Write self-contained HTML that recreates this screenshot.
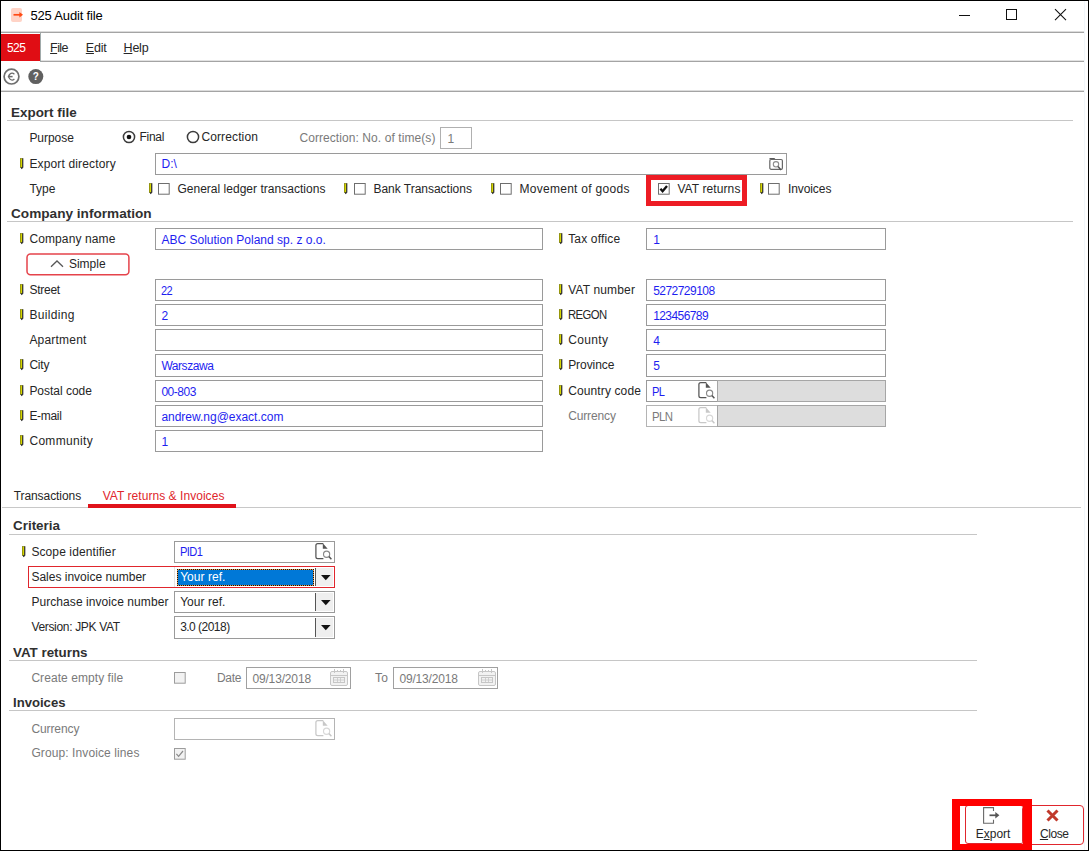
<!DOCTYPE html>
<html lang="en"><head><meta charset="utf-8"><title>525 Audit file</title>
<style>
html,body{margin:0;padding:0;background:#fff;}
body{width:1089px;height:851px;position:relative;overflow:hidden;font-family:"Liberation Sans",sans-serif;}
.b{position:absolute;box-sizing:border-box;display:block;}
.t{position:absolute;white-space:pre;line-height:20px;height:20px;transform-origin:0 50%;}
.t u{text-decoration:underline;text-underline-offset:1px;}
#frame{position:absolute;left:0;top:0;width:1089px;height:851px;box-sizing:border-box;border:1px solid #000;}
</style></head>
<body>
<div class="b" style="left:11px;top:8px;width:11px;height:14px;background:#ffd3c6;border-radius:2px;"></div>
<svg class="b" style="left:13px;top:10px" width="11" height="10" viewBox="0 0 11 10"><path d="M0.5 4.8 H7.5" fill="none" stroke="#ff4a14" stroke-width="1.7"/><path d="M6.4 2 L10 4.8 L6.4 7.6 Z" fill="#ff4a14"/></svg>
<div class="b" style="left:959px;top:15px;width:11px;height:1px;background:#111;"></div>
<div class="b" style="left:1006px;top:9px;width:11px;height:11px;border:1px solid #111;"></div>
<svg class="b" style="left:1054px;top:8px" width="13" height="13" viewBox="0 0 13 13"><path d="M1 1.2 L12 12.2 M12 1.2 L1 12.2" stroke="#111" stroke-width="1.1"/></svg>
<div class="b" style="left:1px;top:31px;width:1084px;height:1px;background:#dcdcdc;"></div>
<div class="b" style="left:1px;top:32px;width:1084px;height:1px;background:#a4a4a4;"></div>
<div class="b" style="left:1px;top:34px;width:39px;height:27px;background:#e00d14;"></div>
<div class="b" style="left:41px;top:60px;width:1044px;height:1px;background:#e2e2e2;"></div>
<div class="b" style="left:41px;top:61px;width:1044px;height:1px;background:#a4a4a4;"></div>
<div class="b" style="left:40px;top:33px;width:1px;height:29px;background:#a0aaaa;"></div>
<svg class="b" style="left:3px;top:68px" width="18" height="18" viewBox="0 0 18 18"><circle cx="8.5" cy="8.6" r="7.4" fill="#fff" stroke="#6e6e6e" stroke-width="1.7"/><path d="M11.4 6.2 A3.3 3.3 0 1 0 11.4 11" fill="none" stroke="#6a6a6a" stroke-width="1.2"/><path d="M4.8 8.6 H9.6" stroke="#6a6a6a" stroke-width="1.5"/></svg>
<svg class="b" style="left:28px;top:69px" width="16" height="16" viewBox="0 0 16 16"><circle cx="7.8" cy="7.6" r="7.5" fill="#606060"/><text x="7.8" y="11.2" text-anchor="middle" font-family="Liberation Sans, sans-serif" font-weight="bold" font-size="10" fill="#fff">?</text></svg>
<div class="b" style="left:1px;top:90px;width:1084px;height:1px;background:#dcdcdc;"></div>
<div class="b" style="left:1px;top:91px;width:1084px;height:1px;background:#a4a4a4;"></div>
<div class="b" style="left:1084px;top:1px;width:1px;height:849px;background:#f1f6fb;"></div>
<div class="b" style="left:7px;top:120px;width:1066px;height:1px;background:#c6c6c6;"></div>
<svg class="b" style="left:122.3px;top:129.8px" width="14" height="14" viewBox="0 0 14 14"><circle cx="7" cy="7" r="5.6" fill="#fff" stroke="#3c3c3c" stroke-width="1.5"/><circle cx="7" cy="7" r="2.3" fill="#111"/></svg>
<svg class="b" style="left:185.8px;top:129.8px" width="14" height="14" viewBox="0 0 14 14"><circle cx="7" cy="7" r="5.6" fill="#fff" stroke="#3c3c3c" stroke-width="1.5"/></svg>
<div class="b" style="left:440px;top:127px;width:32px;height:22px;background:#fff;border:1px solid #b0b0b0;"></div>
<svg class="b" style="left:20px;top:158px" width="4" height="12" viewBox="0 0 4 12"><rect x="0" y="0.4" width="2.3" height="9.2" fill="#d6d600"/><rect x="0" y="0.4" width="0.6" height="9.2" fill="#6e6e10"/><rect x="0" y="0.2" width="3.2" height="0.6" fill="#77771a"/><rect x="2.2" y="0.4" width="1.1" height="9.2" fill="#151515"/><path d="M0.3 9.2 H3.2 L1.8 11.2 Z" fill="#111"/></svg>
<div class="b" style="left:155px;top:153px;width:632px;height:22px;background:#fff;border:1px solid #9a9a9a;"></div>
<svg class="b" style="left:769px;top:157px" width="15" height="14" viewBox="0 0 15 14"><path d="M0.5 0.9 H5.4 L6.9 2.6 H0.5 Z" fill="#5c5c5c"/><rect x="0.8" y="2.5" width="12.6" height="9.8" rx="1.3" fill="#fff" stroke="#686868" stroke-width="1.2"/><circle cx="7" cy="7.3" r="2.7" fill="#fff" stroke="#8c8c8c" stroke-width="1.1"/><path d="M9 9.6 L12 13" stroke="#555" stroke-width="1.5"/></svg>
<svg class="b" style="left:149px;top:183px" width="4" height="12" viewBox="0 0 4 12"><rect x="0" y="0.4" width="2.3" height="9.2" fill="#d6d600"/><rect x="0" y="0.4" width="0.6" height="9.2" fill="#6e6e10"/><rect x="0" y="0.2" width="3.2" height="0.6" fill="#77771a"/><rect x="2.2" y="0.4" width="1.1" height="9.2" fill="#151515"/><path d="M0.3 9.2 H3.2 L1.8 11.2 Z" fill="#111"/></svg>
<svg class="b" style="left:158px;top:183px" width="12" height="12" viewBox="0 0 12 12"><rect x="0.5" y="0.5" width="10.7" height="10.7" fill="#fff" stroke="#6e6e6e"/></svg>
<svg class="b" style="left:344.3px;top:183px" width="4" height="12" viewBox="0 0 4 12"><rect x="0" y="0.4" width="2.3" height="9.2" fill="#d6d600"/><rect x="0" y="0.4" width="0.6" height="9.2" fill="#6e6e10"/><rect x="0" y="0.2" width="3.2" height="0.6" fill="#77771a"/><rect x="2.2" y="0.4" width="1.1" height="9.2" fill="#151515"/><path d="M0.3 9.2 H3.2 L1.8 11.2 Z" fill="#111"/></svg>
<svg class="b" style="left:353.6px;top:183px" width="12" height="12" viewBox="0 0 12 12"><rect x="0.5" y="0.5" width="10.7" height="10.7" fill="#fff" stroke="#6e6e6e"/></svg>
<svg class="b" style="left:491.3px;top:183px" width="4" height="12" viewBox="0 0 4 12"><rect x="0" y="0.4" width="2.3" height="9.2" fill="#d6d600"/><rect x="0" y="0.4" width="0.6" height="9.2" fill="#6e6e10"/><rect x="0" y="0.2" width="3.2" height="0.6" fill="#77771a"/><rect x="2.2" y="0.4" width="1.1" height="9.2" fill="#151515"/><path d="M0.3 9.2 H3.2 L1.8 11.2 Z" fill="#111"/></svg>
<svg class="b" style="left:499.5px;top:183px" width="12" height="12" viewBox="0 0 12 12"><rect x="0.5" y="0.5" width="10.7" height="10.7" fill="#fff" stroke="#6e6e6e"/></svg>
<svg class="b" style="left:657.5px;top:183px" width="12" height="12" viewBox="0 0 12 12"><rect x="0.5" y="0.5" width="10.7" height="10.7" fill="#fff" stroke="#6e6e6e"/><path d="M2.4 5.8 L4.6 8.3 L9 3" fill="none" stroke="#111" stroke-width="2.3"/></svg>
<svg class="b" style="left:760px;top:183px" width="4" height="12" viewBox="0 0 4 12"><rect x="0" y="0.4" width="2.3" height="9.2" fill="#d6d600"/><rect x="0" y="0.4" width="0.6" height="9.2" fill="#6e6e10"/><rect x="0" y="0.2" width="3.2" height="0.6" fill="#77771a"/><rect x="2.2" y="0.4" width="1.1" height="9.2" fill="#151515"/><path d="M0.3 9.2 H3.2 L1.8 11.2 Z" fill="#111"/></svg>
<svg class="b" style="left:768px;top:183px" width="12" height="12" viewBox="0 0 12 12"><rect x="0.5" y="0.5" width="10.7" height="10.7" fill="#fff" stroke="#6e6e6e"/></svg>
<div class="b" style="left:646px;top:175px;width:101px;height:31px;border:5px solid #ed1c24;"></div>
<div class="b" style="left:7px;top:221px;width:1066px;height:1px;background:#c6c6c6;"></div>
<svg class="b" style="left:20px;top:233px" width="4" height="12" viewBox="0 0 4 12"><rect x="0" y="0.4" width="2.3" height="9.2" fill="#d6d600"/><rect x="0" y="0.4" width="0.6" height="9.2" fill="#6e6e10"/><rect x="0" y="0.2" width="3.2" height="0.6" fill="#77771a"/><rect x="2.2" y="0.4" width="1.1" height="9.2" fill="#151515"/><path d="M0.3 9.2 H3.2 L1.8 11.2 Z" fill="#111"/></svg>
<div class="b" style="left:155px;top:228px;width:388px;height:22px;background:#fff;border:1px solid #9a9a9a;"></div>
<svg class="b" style="left:20px;top:284px" width="4" height="12" viewBox="0 0 4 12"><rect x="0" y="0.4" width="2.3" height="9.2" fill="#d6d600"/><rect x="0" y="0.4" width="0.6" height="9.2" fill="#6e6e10"/><rect x="0" y="0.2" width="3.2" height="0.6" fill="#77771a"/><rect x="2.2" y="0.4" width="1.1" height="9.2" fill="#151515"/><path d="M0.3 9.2 H3.2 L1.8 11.2 Z" fill="#111"/></svg>
<div class="b" style="left:155px;top:279px;width:388px;height:22px;background:#fff;border:1px solid #9a9a9a;"></div>
<svg class="b" style="left:20px;top:309px" width="4" height="12" viewBox="0 0 4 12"><rect x="0" y="0.4" width="2.3" height="9.2" fill="#d6d600"/><rect x="0" y="0.4" width="0.6" height="9.2" fill="#6e6e10"/><rect x="0" y="0.2" width="3.2" height="0.6" fill="#77771a"/><rect x="2.2" y="0.4" width="1.1" height="9.2" fill="#151515"/><path d="M0.3 9.2 H3.2 L1.8 11.2 Z" fill="#111"/></svg>
<div class="b" style="left:155px;top:304px;width:388px;height:22px;background:#fff;border:1px solid #9a9a9a;"></div>
<div class="b" style="left:155px;top:329px;width:388px;height:22px;background:#fff;border:1px solid #9a9a9a;"></div>
<svg class="b" style="left:20px;top:359px" width="4" height="12" viewBox="0 0 4 12"><rect x="0" y="0.4" width="2.3" height="9.2" fill="#d6d600"/><rect x="0" y="0.4" width="0.6" height="9.2" fill="#6e6e10"/><rect x="0" y="0.2" width="3.2" height="0.6" fill="#77771a"/><rect x="2.2" y="0.4" width="1.1" height="9.2" fill="#151515"/><path d="M0.3 9.2 H3.2 L1.8 11.2 Z" fill="#111"/></svg>
<div class="b" style="left:155px;top:354px;width:388px;height:23px;background:#fff;border:1px solid #9a9a9a;"></div>
<svg class="b" style="left:20px;top:385px" width="4" height="12" viewBox="0 0 4 12"><rect x="0" y="0.4" width="2.3" height="9.2" fill="#d6d600"/><rect x="0" y="0.4" width="0.6" height="9.2" fill="#6e6e10"/><rect x="0" y="0.2" width="3.2" height="0.6" fill="#77771a"/><rect x="2.2" y="0.4" width="1.1" height="9.2" fill="#151515"/><path d="M0.3 9.2 H3.2 L1.8 11.2 Z" fill="#111"/></svg>
<div class="b" style="left:155px;top:380px;width:388px;height:22px;background:#fff;border:1px solid #9a9a9a;"></div>
<svg class="b" style="left:20px;top:410px" width="4" height="12" viewBox="0 0 4 12"><rect x="0" y="0.4" width="2.3" height="9.2" fill="#d6d600"/><rect x="0" y="0.4" width="0.6" height="9.2" fill="#6e6e10"/><rect x="0" y="0.2" width="3.2" height="0.6" fill="#77771a"/><rect x="2.2" y="0.4" width="1.1" height="9.2" fill="#151515"/><path d="M0.3 9.2 H3.2 L1.8 11.2 Z" fill="#111"/></svg>
<div class="b" style="left:155px;top:405px;width:388px;height:22px;background:#fff;border:1px solid #9a9a9a;"></div>
<svg class="b" style="left:20px;top:435px" width="4" height="12" viewBox="0 0 4 12"><rect x="0" y="0.4" width="2.3" height="9.2" fill="#d6d600"/><rect x="0" y="0.4" width="0.6" height="9.2" fill="#6e6e10"/><rect x="0" y="0.2" width="3.2" height="0.6" fill="#77771a"/><rect x="2.2" y="0.4" width="1.1" height="9.2" fill="#151515"/><path d="M0.3 9.2 H3.2 L1.8 11.2 Z" fill="#111"/></svg>
<div class="b" style="left:155px;top:430px;width:388px;height:22px;background:#fff;border:1px solid #9a9a9a;"></div>
<svg class="b" style="left:558.8px;top:233px" width="4" height="12" viewBox="0 0 4 12"><rect x="0" y="0.4" width="2.3" height="9.2" fill="#d6d600"/><rect x="0" y="0.4" width="0.6" height="9.2" fill="#6e6e10"/><rect x="0" y="0.2" width="3.2" height="0.6" fill="#77771a"/><rect x="2.2" y="0.4" width="1.1" height="9.2" fill="#151515"/><path d="M0.3 9.2 H3.2 L1.8 11.2 Z" fill="#111"/></svg>
<div class="b" style="left:646px;top:228px;width:240px;height:22px;background:#fff;border:1px solid #9a9a9a;"></div>
<svg class="b" style="left:558.8px;top:284px" width="4" height="12" viewBox="0 0 4 12"><rect x="0" y="0.4" width="2.3" height="9.2" fill="#d6d600"/><rect x="0" y="0.4" width="0.6" height="9.2" fill="#6e6e10"/><rect x="0" y="0.2" width="3.2" height="0.6" fill="#77771a"/><rect x="2.2" y="0.4" width="1.1" height="9.2" fill="#151515"/><path d="M0.3 9.2 H3.2 L1.8 11.2 Z" fill="#111"/></svg>
<div class="b" style="left:646px;top:279px;width:240px;height:22px;background:#fff;border:1px solid #9a9a9a;"></div>
<svg class="b" style="left:558.8px;top:309px" width="4" height="12" viewBox="0 0 4 12"><rect x="0" y="0.4" width="2.3" height="9.2" fill="#d6d600"/><rect x="0" y="0.4" width="0.6" height="9.2" fill="#6e6e10"/><rect x="0" y="0.2" width="3.2" height="0.6" fill="#77771a"/><rect x="2.2" y="0.4" width="1.1" height="9.2" fill="#151515"/><path d="M0.3 9.2 H3.2 L1.8 11.2 Z" fill="#111"/></svg>
<div class="b" style="left:646px;top:304px;width:240px;height:22px;background:#fff;border:1px solid #9a9a9a;"></div>
<svg class="b" style="left:558.8px;top:334px" width="4" height="12" viewBox="0 0 4 12"><rect x="0" y="0.4" width="2.3" height="9.2" fill="#d6d600"/><rect x="0" y="0.4" width="0.6" height="9.2" fill="#6e6e10"/><rect x="0" y="0.2" width="3.2" height="0.6" fill="#77771a"/><rect x="2.2" y="0.4" width="1.1" height="9.2" fill="#151515"/><path d="M0.3 9.2 H3.2 L1.8 11.2 Z" fill="#111"/></svg>
<div class="b" style="left:646px;top:329px;width:240px;height:22px;background:#fff;border:1px solid #9a9a9a;"></div>
<svg class="b" style="left:558.8px;top:359px" width="4" height="12" viewBox="0 0 4 12"><rect x="0" y="0.4" width="2.3" height="9.2" fill="#d6d600"/><rect x="0" y="0.4" width="0.6" height="9.2" fill="#6e6e10"/><rect x="0" y="0.2" width="3.2" height="0.6" fill="#77771a"/><rect x="2.2" y="0.4" width="1.1" height="9.2" fill="#151515"/><path d="M0.3 9.2 H3.2 L1.8 11.2 Z" fill="#111"/></svg>
<div class="b" style="left:646px;top:354px;width:240px;height:23px;background:#fff;border:1px solid #9a9a9a;"></div>
<svg class="b" style="left:558.8px;top:385px" width="4" height="12" viewBox="0 0 4 12"><rect x="0" y="0.4" width="2.3" height="9.2" fill="#d6d600"/><rect x="0" y="0.4" width="0.6" height="9.2" fill="#6e6e10"/><rect x="0" y="0.2" width="3.2" height="0.6" fill="#77771a"/><rect x="2.2" y="0.4" width="1.1" height="9.2" fill="#151515"/><path d="M0.3 9.2 H3.2 L1.8 11.2 Z" fill="#111"/></svg>
<div class="b" style="left:646px;top:380px;width:72px;height:22px;background:#fff;border:1px solid #9a9a9a;"></div>
<div class="b" style="left:717px;top:380px;width:169px;height:22px;background:#dddddd;border:1px solid #a6a6a6;"></div>
<svg class="b" style="left:697.5px;top:382px" width="17" height="17" viewBox="0 0 17 17"><path d="M8.3 0.7 H2.8 Q0.9 0.7 0.9 2.6 V13.8 Q0.9 15.7 2.8 15.7 H8.4" fill="none" stroke="#555" stroke-width="1.25"/><path d="M7.8 0.2 L12.7 5.8 H7.8 Z" fill="#555"/><circle cx="11.6" cy="11.2" r="3.1" fill="none" stroke="#8a8a8a" stroke-width="1.15"/><path d="M13.9 13.6 L16.4 16.2" stroke="#555" stroke-width="1.5"/></svg>
<div class="b" style="left:646px;top:405px;width:72px;height:22px;background:#fff;border:1px solid #b4b4b4;"></div>
<div class="b" style="left:717px;top:405px;width:169px;height:22px;background:#dddddd;border:1px solid #a6a6a6;"></div>
<svg class="b" style="left:697.5px;top:407px" width="17" height="17" viewBox="0 0 17 17"><path d="M8.3 0.7 H2.8 Q0.9 0.7 0.9 2.6 V13.8 Q0.9 15.7 2.8 15.7 H8.4" fill="none" stroke="#c8c8c8" stroke-width="1.25"/><path d="M7.8 0.2 L12.7 5.8 H7.8 Z" fill="#c8c8c8"/><circle cx="11.6" cy="11.2" r="3.1" fill="none" stroke="#d8d8d8" stroke-width="1.15"/><path d="M13.9 13.6 L16.4 16.2" stroke="#c8c8c8" stroke-width="1.5"/></svg>
<svg class="b" style="left:25px;top:252px" width="107" height="26" viewBox="0 0 107 26"><rect x="2" y="1.9" width="101.9" height="20.9" rx="3.5" fill="#fff" stroke="#e5434b" stroke-width="1.5"/></svg>
<svg class="b" style="left:49px;top:259px" width="16" height="9" viewBox="0 0 16 9"><path d="M2 7.8 L8 2 L14 7.8" fill="none" stroke="#585858" stroke-width="1.3"/></svg>
<div class="b" style="left:2px;top:507px;width:1079px;height:1px;background:#c8c8c8;"></div>
<div class="b" style="left:88px;top:504px;width:148px;height:4px;background:#e0121a;"></div>
<div class="b" style="left:9px;top:534px;width:968px;height:1px;background:#c6c6c6;"></div>
<svg class="b" style="left:22.2px;top:546.4px" width="4" height="12" viewBox="0 0 4 12"><rect x="0" y="0.4" width="2.3" height="9.2" fill="#d6d600"/><rect x="0" y="0.4" width="0.6" height="9.2" fill="#6e6e10"/><rect x="0" y="0.2" width="3.2" height="0.6" fill="#77771a"/><rect x="2.2" y="0.4" width="1.1" height="9.2" fill="#151515"/><path d="M0.3 9.2 H3.2 L1.8 11.2 Z" fill="#111"/></svg>
<div class="b" style="left:174px;top:541px;width:161px;height:22px;background:#fff;border:1px solid #9a9a9a;"></div>
<svg class="b" style="left:314.5px;top:543px" width="17" height="17" viewBox="0 0 17 17"><path d="M8.3 0.7 H2.8 Q0.9 0.7 0.9 2.6 V13.8 Q0.9 15.7 2.8 15.7 H8.4" fill="none" stroke="#555" stroke-width="1.25"/><path d="M7.8 0.2 L12.7 5.8 H7.8 Z" fill="#555"/><circle cx="11.6" cy="11.2" r="3.1" fill="none" stroke="#8a8a8a" stroke-width="1.15"/><path d="M13.9 13.6 L16.4 16.2" stroke="#555" stroke-width="1.5"/></svg>
<div class="b" style="left:28px;top:566px;width:307px;height:22px;background:#fff;border:1px solid #e0262d;"></div>
<div class="b" style="left:174px;top:567px;width:1px;height:20px;background:#e4e4e4;"></div>
<div class="b" style="left:316px;top:568px;width:17px;height:18px;background:#efefef;"></div>
<div class="b" style="left:315px;top:568px;width:1px;height:18px;background:#555;"></div>
<svg class="b" style="left:320.5px;top:574.5px" width="10" height="6" viewBox="0 0 10 6"><path d="M0 0 H9.6 L4.8 5.2 Z" fill="#111"/></svg>
<div class="b" style="left:177px;top:569px;width:137px;height:17px;background:#0078d7;border:1px solid #e09a50;"></div>
<div class="b" style="left:177px;top:569px;width:137px;height:17px;border:1px dotted #1a1208;"></div>
<div class="b" style="left:174px;top:591px;width:161px;height:22px;background:#fff;border:1px solid #9a9a9a;"></div>
<div class="b" style="left:316px;top:593px;width:17px;height:18px;background:#efefef;"></div>
<div class="b" style="left:315px;top:593px;width:1px;height:18px;background:#555;"></div>
<svg class="b" style="left:320.5px;top:599.5px" width="10" height="6" viewBox="0 0 10 6"><path d="M0 0 H9.6 L4.8 5.2 Z" fill="#111"/></svg>
<div class="b" style="left:174px;top:616px;width:161px;height:23px;background:#fff;border:1px solid #9a9a9a;"></div>
<div class="b" style="left:316px;top:618px;width:17px;height:19px;background:#efefef;"></div>
<div class="b" style="left:315px;top:618px;width:1px;height:19px;background:#555;"></div>
<svg class="b" style="left:320.5px;top:624.5px" width="10" height="6" viewBox="0 0 10 6"><path d="M0 0 H9.6 L4.8 5.2 Z" fill="#111"/></svg>
<div class="b" style="left:9px;top:660px;width:968px;height:1px;background:#c6c6c6;"></div>
<svg class="b" style="left:174px;top:672px" width="12" height="12" viewBox="0 0 12 12"><rect x="0.5" y="0.5" width="10.7" height="10.7" fill="#f2f2f2" stroke="#9c9c9c"/></svg>
<div class="b" style="left:246px;top:667px;width:105px;height:22px;background:#fff;border:1px solid #a0a0a0;"></div>
<svg class="b" style="left:330px;top:669px" width="18" height="17" viewBox="0 0 18 17"><rect x="0.5" y="2.5" width="17" height="14" rx="1.5" fill="#f2f2f2" stroke="#c6c6c6"/><path d="M1 6.5 H17" stroke="#c6c6c6"/><path d="M4.5 0 V4 M13.5 0 V4 M7.5 1 V3 M10.5 1 V3" stroke="#c6c6c6" stroke-width="1"/><rect x="3.5" y="8.5" width="11" height="5" fill="none" stroke="#c6c6c6"/><path d="M7.5 8.5 V13.5 M10.5 8.5 V13.5 M3.5 11 H14.5" stroke="#c6c6c6" stroke-width="0.8"/></svg>
<div class="b" style="left:393px;top:667px;width:105px;height:22px;background:#fff;border:1px solid #a0a0a0;"></div>
<svg class="b" style="left:477.5px;top:669px" width="18" height="17" viewBox="0 0 18 17"><rect x="0.5" y="2.5" width="17" height="14" rx="1.5" fill="#f2f2f2" stroke="#c6c6c6"/><path d="M1 6.5 H17" stroke="#c6c6c6"/><path d="M4.5 0 V4 M13.5 0 V4 M7.5 1 V3 M10.5 1 V3" stroke="#c6c6c6" stroke-width="1"/><rect x="3.5" y="8.5" width="11" height="5" fill="none" stroke="#c6c6c6"/><path d="M7.5 8.5 V13.5 M10.5 8.5 V13.5 M3.5 11 H14.5" stroke="#c6c6c6" stroke-width="0.8"/></svg>
<div class="b" style="left:9px;top:710px;width:968px;height:1px;background:#c6c6c6;"></div>
<div class="b" style="left:174px;top:718px;width:161px;height:22px;background:#fff;border:1px solid #b4b4b4;"></div>
<svg class="b" style="left:314.5px;top:720px" width="17" height="17" viewBox="0 0 17 17"><path d="M8.3 0.7 H2.8 Q0.9 0.7 0.9 2.6 V13.8 Q0.9 15.7 2.8 15.7 H8.4" fill="none" stroke="#c8c8c8" stroke-width="1.25"/><path d="M7.8 0.2 L12.7 5.8 H7.8 Z" fill="#c8c8c8"/><circle cx="11.6" cy="11.2" r="3.1" fill="none" stroke="#d8d8d8" stroke-width="1.15"/><path d="M13.9 13.6 L16.4 16.2" stroke="#c8c8c8" stroke-width="1.5"/></svg>
<svg class="b" style="left:174px;top:748px" width="12" height="12" viewBox="0 0 12 12"><rect x="0.5" y="0.5" width="10.7" height="10.7" fill="#f2f2f2" stroke="#9c9c9c"/><path d="M2.4 5.8 L4.6 8.3 L9 3" fill="none" stroke="#8a8a8a" stroke-width="1.2"/></svg>
<div class="b" style="left:965px;top:805px;width:59px;height:39px;background:#fff;border:1px solid #e0262d;border-radius:3px;"></div>
<div class="b" style="left:1022px;top:805px;width:62px;height:40px;background:#fff;border:1px solid #e0262d;border-radius:4px;"></div>
<svg class="b" style="left:983px;top:807px" width="18" height="17" viewBox="0 0 18 17"><path d="M10.5 4 V0.6 H0.6 V16.2 H10.5 V12.8" fill="none" stroke="#686868" stroke-width="1.1"/><path d="M6.5 8.3 H14" fill="none" stroke="#555" stroke-width="1.7"/><path d="M12.3 5 L16.4 8.3 L12.3 11.6 Z" fill="#555"/></svg>
<svg class="b" style="left:1046px;top:809px" width="13" height="13" viewBox="0 0 13 13"><path d="M1.5 1.5 L11.5 11.5 M11.5 1.5 L1.5 11.5" stroke="#c0392b" stroke-width="3"/></svg>
<span class="t" id="t0" style="left:30.40px;top:5px;font-size:13px;color:#000;line-height:21px;height:21px;letter-spacing:-0.166px;">525 Audit file</span>
<span class="t" id="t1" style="left:7.00px;top:38px;font-size:12.5px;color:#fff;letter-spacing:-0.600px;transform:scaleX(0.9614);">525</span>
<span class="t" id="t2" style="left:50.10px;top:38px;font-size:12.5px;color:#262626;letter-spacing:-0.600px;"><u>F</u>ile</span>
<span class="t" id="t3" style="left:85.80px;top:38px;font-size:12.5px;color:#262626;letter-spacing:-0.216px;"><u>E</u>dit</span>
<span class="t" id="t4" style="left:123.60px;top:38px;font-size:12.5px;color:#262626;letter-spacing:-0.240px;"><u>H</u>elp</span>
<span class="t" id="t5" style="left:11.30px;top:103px;font-size:12px;color:#303030;font-weight:bold;transform:scaleX(1.1195);">Export file</span>
<span class="t" id="t6" style="left:29.40px;top:128px;font-size:12px;color:#262626;letter-spacing:-0.034px;">Purpose</span>
<span class="t" id="t7" style="left:139.40px;top:127px;font-size:12px;color:#262626;letter-spacing:-0.254px;">Final</span>
<span class="t" id="t8" style="left:201.40px;top:127px;font-size:12px;color:#262626;letter-spacing:0.127px;">Correction</span>
<span class="t" id="t9" style="left:299.40px;top:128px;font-size:12px;color:#7a7a7a;letter-spacing:0.078px;">Correction: No. of time(s)</span>
<span class="t" id="t10" style="left:447.40px;top:129px;font-size:12px;color:#7a7a7a;">1</span>
<span class="t" id="t11" style="left:29.40px;top:154px;font-size:12px;color:#262626;letter-spacing:0.151px;">Export directory</span>
<span class="t" id="t12" style="left:161.40px;top:154px;font-size:12px;color:#1e1ef0;letter-spacing:0.078px;">D:\</span>
<span class="t" id="t13" style="left:29.40px;top:179px;font-size:12px;color:#262626;letter-spacing:-0.005px;">Type</span>
<span class="t" id="t14" style="left:177.40px;top:179px;font-size:12px;color:#262626;letter-spacing:0.022px;">General ledger transactions</span>
<span class="t" id="t15" style="left:373.40px;top:179px;font-size:12px;color:#262626;letter-spacing:-0.014px;">Bank Transactions</span>
<span class="t" id="t16" style="left:519.40px;top:179px;font-size:12px;color:#262626;letter-spacing:0.287px;">Movement of goods</span>
<span class="t" id="t17" style="left:677.40px;top:179px;font-size:12px;color:#262626;letter-spacing:0.097px;">VAT returns</span>
<span class="t" id="t18" style="left:787.90px;top:179px;font-size:12px;color:#262626;letter-spacing:-0.076px;">Invoices</span>
<span class="t" id="t19" style="left:11.30px;top:204px;font-size:12px;color:#303030;font-weight:bold;transform:scaleX(1.1345);">Company information</span>
<span class="t" id="t20" style="left:29.40px;top:229px;font-size:12px;color:#262626;letter-spacing:0.116px;">Company name</span>
<span class="t" id="t21" style="left:161.40px;top:230px;font-size:12px;color:#1e1ef0;letter-spacing:0.013px;">ABC Solution Poland sp. z o.o.</span>
<span class="t" id="t22" style="left:29.40px;top:280px;font-size:12px;color:#262626;letter-spacing:-0.253px;">Street</span>
<span class="t" id="t23" style="left:161.40px;top:281px;font-size:12px;color:#1e1ef0;letter-spacing:-0.600px;transform:scaleX(0.9209);">22</span>
<span class="t" id="t24" style="left:29.40px;top:305px;font-size:12px;color:#262626;letter-spacing:0.328px;">Building</span>
<span class="t" id="t25" style="left:161.40px;top:306px;font-size:12px;color:#1e1ef0;">2</span>
<span class="t" id="t26" style="left:29.40px;top:330px;font-size:12px;color:#262626;letter-spacing:0.205px;">Apartment</span>
<span class="t" id="t27" style="left:29.40px;top:355px;font-size:12px;color:#262626;letter-spacing:-0.224px;">City</span>
<span class="t" id="t28" style="left:161.40px;top:356px;font-size:12px;color:#1e1ef0;letter-spacing:-0.440px;">Warszawa</span>
<span class="t" id="t29" style="left:29.40px;top:381px;font-size:12px;color:#262626;letter-spacing:-0.022px;">Postal code</span>
<span class="t" id="t30" style="left:161.40px;top:382px;font-size:12px;color:#1e1ef0;letter-spacing:-0.475px;">00-803</span>
<span class="t" id="t31" style="left:29.40px;top:406px;font-size:12px;color:#262626;letter-spacing:-0.303px;">E-mail</span>
<span class="t" id="t32" style="left:161.40px;top:407px;font-size:12px;color:#1e1ef0;letter-spacing:-0.014px;">andrew.ng@exact.com</span>
<span class="t" id="t33" style="left:29.40px;top:431px;font-size:12px;color:#262626;letter-spacing:0.320px;">Community</span>
<span class="t" id="t34" style="left:161.40px;top:432px;font-size:12px;color:#1e1ef0;">1</span>
<span class="t" id="t35" style="left:568.15px;top:229px;font-size:12px;color:#262626;letter-spacing:0.168px;">Tax office</span>
<span class="t" id="t36" style="left:653.15px;top:230px;font-size:12px;color:#1e1ef0;">1</span>
<span class="t" id="t37" style="left:568.15px;top:280px;font-size:12px;color:#262626;letter-spacing:0.153px;">VAT number</span>
<span class="t" id="t38" style="left:653.15px;top:281px;font-size:12px;color:#1e1ef0;letter-spacing:-0.528px;">5272729108</span>
<span class="t" id="t39" style="left:568.15px;top:305px;font-size:12px;color:#262626;letter-spacing:-0.600px;transform:scaleX(0.9432);">REGON</span>
<span class="t" id="t40" style="left:653.15px;top:306px;font-size:12px;color:#1e1ef0;letter-spacing:-0.572px;">123456789</span>
<span class="t" id="t41" style="left:568.15px;top:330px;font-size:12px;color:#262626;letter-spacing:0.344px;">County</span>
<span class="t" id="t42" style="left:653.15px;top:331px;font-size:12px;color:#1e1ef0;">4</span>
<span class="t" id="t43" style="left:568.15px;top:355px;font-size:12px;color:#262626;letter-spacing:-0.062px;">Province</span>
<span class="t" id="t44" style="left:653.15px;top:356px;font-size:12px;color:#1e1ef0;">5</span>
<span class="t" id="t45" style="left:568.15px;top:381px;font-size:12px;color:#262626;letter-spacing:0.125px;">Country code</span>
<span class="t" id="t46" style="left:652.40px;top:382px;font-size:12px;color:#1e1ef0;letter-spacing:-0.600px;transform:scaleX(0.9228);">PL</span>
<span class="t" id="t47" style="left:568.15px;top:406px;font-size:12px;color:#7a7a7a;letter-spacing:-0.134px;">Currency</span>
<span class="t" id="t48" style="left:652.40px;top:407px;font-size:12px;color:#7a7a7a;letter-spacing:-0.600px;transform:scaleX(0.9483);">PLN</span>
<span class="t" id="t49" style="left:68.90px;top:254px;font-size:12px;color:#262626;letter-spacing:0.013px;">Simple</span>
<span class="t" id="t50" style="left:13.65px;top:486px;font-size:12px;color:#262626;letter-spacing:-0.068px;">Transactions</span>
<span class="t" id="t51" style="left:102.65px;top:486px;font-size:12px;color:#e0262d;letter-spacing:0.049px;">VAT returns &amp; Invoices</span>
<span class="t" id="t52" style="left:13.00px;top:516px;font-size:12px;color:#303030;font-weight:bold;transform:scaleX(1.1182);">Criteria</span>
<span class="t" id="t53" style="left:31.40px;top:542px;font-size:12px;color:#262626;letter-spacing:0.102px;">Scope identifier</span>
<span class="t" id="t54" style="left:180.15px;top:542px;font-size:12px;color:#1e1ef0;letter-spacing:-0.600px;transform:scaleX(0.9242);">PID1</span>
<span class="t" id="t55" style="left:31.40px;top:567px;font-size:12px;color:#262626;">Sales invoice number</span>
<span class="t" id="t56" style="left:180.15px;top:567px;font-size:12px;color:#fff;letter-spacing:0.041px;">Your ref.</span>
<span class="t" id="t57" style="left:31.40px;top:592px;font-size:12px;color:#262626;letter-spacing:0.072px;">Purchase invoice number</span>
<span class="t" id="t58" style="left:180.15px;top:592px;font-size:12px;color:#262626;letter-spacing:0.041px;">Your ref.</span>
<span class="t" id="t59" style="left:31.40px;top:617px;font-size:12px;color:#262626;letter-spacing:-0.323px;">Version: JPK VAT</span>
<span class="t" id="t60" style="left:180.15px;top:617px;font-size:12px;color:#262626;letter-spacing:-0.523px;">3.0 (2018)</span>
<span class="t" id="t61" style="left:13.00px;top:643px;font-size:12px;color:#303030;font-weight:bold;transform:scaleX(1.1135);">VAT returns</span>
<span class="t" id="t62" style="left:31.40px;top:668px;font-size:12px;color:#7a7a7a;letter-spacing:0.065px;">Create empty file</span>
<span class="t" id="t63" style="left:216.90px;top:668px;font-size:12px;color:#7a7a7a;letter-spacing:-0.286px;">Date</span>
<span class="t" id="t64" style="left:252.40px;top:669px;font-size:12px;color:#7a7a7a;letter-spacing:-0.151px;">09/13/2018</span>
<span class="t" id="t65" style="left:375.10px;top:668px;font-size:12px;color:#7a7a7a;letter-spacing:0.213px;">To</span>
<span class="t" id="t66" style="left:399.40px;top:669px;font-size:12px;color:#7a7a7a;letter-spacing:-0.162px;">09/13/2018</span>
<span class="t" id="t67" style="left:13.00px;top:693px;font-size:12px;color:#303030;font-weight:bold;transform:scaleX(1.0930);">Invoices</span>
<span class="t" id="t68" style="left:31.40px;top:719px;font-size:12px;color:#7a7a7a;letter-spacing:-0.098px;">Currency</span>
<span class="t" id="t69" style="left:31.40px;top:743px;font-size:12px;color:#7a7a7a;letter-spacing:0.102px;">Group: Invoice lines</span>
<span class="t" id="t70" style="left:975.70px;top:824px;font-size:12px;color:#262626;">E<u>x</u>port</span>
<span class="t" id="t71" style="left:1039.90px;top:824px;font-size:12px;color:#262626;letter-spacing:-0.422px;"><u>C</u>lose</span>
<div class="b" style="left:952px;top:799px;width:80px;height:52px;border:8px solid #ff0000;border-width:7px 9px 7px 8px;"></div>
<div id="frame"></div>
</body></html>
